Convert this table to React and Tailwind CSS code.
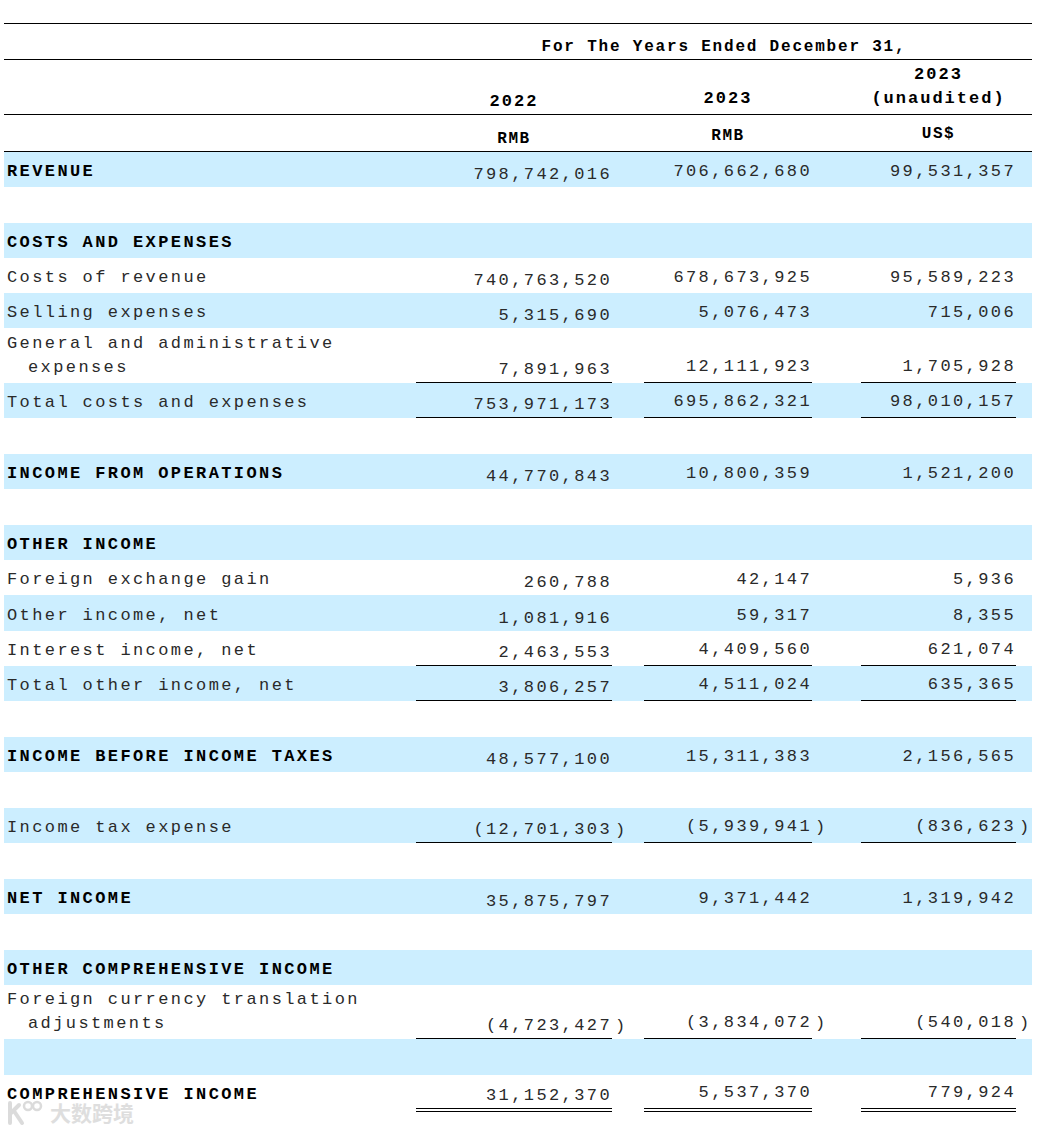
import React from "react";

const MONO = { fontFamily: '"Liberation Mono", "Courier New", monospace' };

const GRID = "grid grid-cols-[412px_196px_32px_168px_49px_155px_16px]";

const rows = [
  { label: "REVENUE", bold: true, h: "h-[35px]", bg: true, v: ["798,742,016", "706,662,680", "99,531,357"] },
  { blank: true, h: "h-[36px]" },
  { label: "COSTS AND EXPENSES", bold: true, h: "h-[35px]", bg: true },
  { label: "Costs of revenue", h: "h-[35px]", v: ["740,763,520", "678,673,925", "95,589,223"] },
  { label: "Selling expenses", h: "h-[35px]", bg: true, v: ["5,315,690", "5,076,473", "715,006"] },
  { label: "General and administrative", label2: "expenses", h: "h-[55px]", v: ["7,891,963", "12,111,923", "1,705,928"], ul: true },
  { label: "Total costs and expenses", h: "h-[35px]", bg: true, v: ["753,971,173", "695,862,321", "98,010,157"], ul: true },
  { blank: true, h: "h-[36px]" },
  { label: "INCOME FROM OPERATIONS", bold: true, h: "h-[35px]", bg: true, v: ["44,770,843", "10,800,359", "1,521,200"] },
  { blank: true, h: "h-[36px]" },
  { label: "OTHER INCOME", bold: true, h: "h-[35px]", bg: true },
  { label: "Foreign exchange gain", h: "h-[35px]", v: ["260,788", "42,147", "5,936"] },
  { label: "Other income, net", h: "h-[36px]", bg: true, v: ["1,081,916", "59,317", "8,355"] },
  { label: "Interest income, net", h: "h-[35px]", v: ["2,463,553", "4,409,560", "621,074"], ul: true },
  { label: "Total other income, net", h: "h-[35px]", bg: true, v: ["3,806,257", "4,511,024", "635,365"], ul: true },
  { blank: true, h: "h-[36px]" },
  { label: "INCOME BEFORE INCOME TAXES", bold: true, h: "h-[35px]", bg: true, v: ["48,577,100", "15,311,383", "2,156,565"] },
  { blank: true, h: "h-[36px]" },
  { label: "Income tax expense", h: "h-[35px]", bg: true, v: ["(12,701,303", "(5,939,941", "(836,623"], paren: true, ul: true },
  { blank: true, h: "h-[36px]" },
  { label: "NET INCOME", bold: true, h: "h-[35px]", bg: true, v: ["35,875,797", "9,371,442", "1,319,942"] },
  { blank: true, h: "h-[36px]" },
  { label: "OTHER COMPREHENSIVE INCOME", bold: true, h: "h-[35px]", bg: true },
  { label: "Foreign currency translation", label2: "adjustments", h: "h-[54px]", v: ["(4,723,427", "(3,834,072", "(540,018"], paren: true, ul: true },
  { blank: true, h: "h-[36px]", bg: true },
  { label: "COMPREHENSIVE INCOME", bold: true, h: "h-[37px]", v: ["31,152,370", "5,537,370", "779,924"], dbl: true },
];

function NumCell({ value, first, ul, dbl }) {
  const border = dbl
    ? "border-b-[4px] border-double border-black"
    : ul
    ? "border-b border-black"
    : "";
  return (
    <div
      className={`flex items-end justify-end text-[17px] leading-[24px] tracking-[2.4px] text-[#2a2a2a] ${
        first ? "pb-0" : "pb-[3px]"
      } ${border}`}
    >
      {value ?? ""}
    </div>
  );
}

function ParenCell({ show, first }) {
  return (
    <div
      className={`flex items-end pl-[3px] text-[17px] leading-[24px] text-[#2a2a2a] ${
        first ? "pb-0" : "pb-[3px]"
      }`}
    >
      {show ? ")" : ""}
    </div>
  );
}

function Row({ r }) {
  const bg = r.bg ? "bg-[#cceeff]" : "bg-white";
  if (r.blank) {
    return <div className={`${r.h} ${bg}`} />;
  }
  const v = r.v || [];
  return (
    <div className={`${GRID} ${r.h} ${bg}`}>
      <div
        className={`flex flex-col justify-end pb-[3px] pl-[3px] text-[17px] leading-[24px] tracking-[2.4px] ${
          r.bold ? "font-bold text-black" : "text-[#2a2a2a]"
        } ${r.dbl ? "pb-[5px]" : ""}`}
      >
        <div>{r.label}</div>
        {r.label2 && <div className="pl-[21px]">{r.label2}</div>}
      </div>
      <NumCell value={v[0]} first ul={r.ul} dbl={r.dbl} />
      <ParenCell show={r.paren} first />
      <NumCell value={v[1]} ul={r.ul} dbl={r.dbl} />
      <ParenCell show={r.paren} />
      <NumCell value={v[2]} ul={r.ul} dbl={r.dbl} />
      <ParenCell show={r.paren} />
    </div>
  );
}

function Watermark() {
  return (
    <div className="absolute left-[5px] top-[1097px] flex items-center gap-[3px] opacity-75 pointer-events-none select-none">
      <svg width="42" height="30" viewBox="0 0 42 30" fill="none">
        <path d="M5 6 L5 26 M5 17 L14 8 M9 14 L17 26" stroke="#d0d0d0" strokeWidth="4" strokeLinecap="round" />
        <circle cx="23" cy="9" r="4" stroke="#d0d0d0" strokeWidth="2.5" />
        <circle cx="32" cy="9" r="4" stroke="#d0d0d0" strokeWidth="2.5" />
      </svg>
      <span
        className="text-[21px] leading-[30px] font-bold text-[#d4d4d4]"
        style={{ fontFamily: '"Noto Sans CJK SC", "Noto Sans", sans-serif' }}
      >
        大数跨境
      </span>
    </div>
  );
}

export default function App() {
  return (
    <div className="relative w-[1043px] h-[1133px] bg-white overflow-hidden" style={MONO}>
      <div className="ml-[4px] mt-[23px] w-[1028px] border-t border-black">
        {/* header row 1 */}
        <div className={`${GRID} h-[36px] border-b border-black`}>
          <div />
          <div className="col-span-6 flex items-end justify-center pb-0 text-[16px] leading-[24px] tracking-[1.8px] font-bold text-black">
            For The Years Ended December 31,
          </div>
        </div>
        {/* header row 2 */}
        <div className={`${GRID} h-[55px] border-b border-black font-bold text-black text-[17px] leading-[24px] tracking-[2px]`}>
          <div />
          <div className="flex items-end justify-center pb-0">2022</div>
          <div />
          <div className="flex items-end justify-center pb-[3px]">2023</div>
          <div />
          <div className="flex flex-col items-center justify-end pb-[3px]">
            <div>2023</div>
            <div>(unaudited)</div>
          </div>
          <div />
        </div>
        {/* header row 3 */}
        <div className={`${GRID} h-[37px] border-b border-black font-bold text-black text-[16px] leading-[24px] tracking-[1.5px]`}>
          <div />
          <div className="flex items-end justify-center pb-0">RMB</div>
          <div />
          <div className="flex items-end justify-center pb-[3px]">RMB</div>
          <div />
          <div className="flex items-end justify-center pb-[5px]">US$</div>
          <div />
        </div>
        {rows.map((r, i) => (
          <Row key={i} r={r} />
        ))}
      </div>
      <Watermark />
    </div>
  );
}
